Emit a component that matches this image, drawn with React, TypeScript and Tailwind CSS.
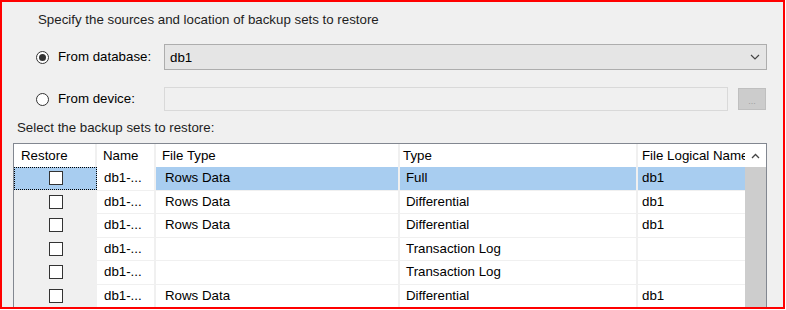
import React from 'react';

type Row = {
  fileType: string;
  type: string;
  logical: string;
};

const rows: Row[] = [
  { fileType: 'Rows Data', type: 'Full', logical: 'db1' },
  { fileType: 'Rows Data', type: 'Differential', logical: 'db1' },
  { fileType: 'Rows Data', type: 'Differential', logical: 'db1' },
  { fileType: '', type: 'Transaction Log', logical: '' },
  { fileType: '', type: 'Transaction Log', logical: '' },
  { fileType: 'Rows Data', type: 'Differential', logical: 'db1' },
];

const font = { fontFamily: '"Liberation Sans", Arial, sans-serif' };

function Radio({ checked }: { checked?: boolean }) {
  return (
    <span className="flex h-[13px] w-[13px] shrink-0 items-center justify-center rounded-full border border-[#333] bg-white">
      {checked && <span className="h-[7px] w-[7px] rounded-full bg-[#333]" />}
    </span>
  );
}

function Checkbox() {
  return <span className="block h-[14px] w-[14px] border border-[#333] bg-white" />;
}

export default function App() {
  return (
    <div className="h-[310px] w-[786px] bg-white text-[13.3px] text-black" style={font}>
      <div className="flex h-[309px] w-[785px] flex-col overflow-hidden border-2 border-[#ff0000] bg-[#f0f0f0]">
        {/* title */}
        <div className="mt-[10px] h-4 shrink-0 pl-[36px] leading-4 text-[#1e1e1e]">
          Specify the sources and location of backup sets to restore
        </div>

        {/* from database */}
        <div className="mt-[16px] flex h-[26px] shrink-0 items-center pl-[34px] pr-[16px]">
          <div className="flex w-[128px] items-center gap-[9px]">
            <Radio checked />
            <span>From database:</span>
          </div>
          <div className="flex h-full flex-1 items-center justify-between border border-[#adadad] bg-[#e5e5e5] pl-[5px] pr-[6px]">
            <span className="pt-[2px]">db1</span>
            <svg width="10" height="6" viewBox="0 0 10 6" fill="none">
              <path d="M1 1l4 4 4-4" stroke="#444" strokeWidth="1.2" />
            </svg>
          </div>
        </div>

        {/* from device */}
        <div className="mt-[17px] flex h-[24px] shrink-0 items-center pl-[34px] pr-[17px]">
          <div className="flex w-[128px] items-center gap-[9px]">
            <Radio />
            <span>From device:</span>
          </div>
          <div className="h-full flex-1 border border-[#d9d9d9] bg-[#f0f0f0]" />
          <div className="ml-[10px] flex h-[22px] w-[28px] items-end justify-center border border-[#bfbfbf] bg-[#cccccc] pb-[3px] text-[9px] leading-none text-[#a0a0a0]">
            ...
          </div>
        </div>

        {/* list */}
        <div className="mt-[9px] h-4 shrink-0 pl-[15px] leading-4 text-[#1e1e1e]">
          Select the backup sets to restore:
        </div>

        <div className="ml-[11px] mt-[7px] h-[200px] w-[754px] shrink-0 border border-[#828790] bg-white">
          {/* header */}
          <div className="flex h-[23px] items-center">
            <div className="flex h-full w-[83px] items-center border-r-2 border-[#f0f0f0] pl-[7px]">Restore</div>
            <div className="flex h-full w-[59px] items-center border-r-2 border-[#f0f0f0] pl-[6px]">Name</div>
            <div className="flex h-full w-[244px] items-center border-r-2 border-[#f0f0f0] pl-[6px]">File Type</div>
            <div className="flex h-full w-[238px] items-center border-r-2 border-[#f0f0f0] pl-[3px]">Type</div>
            <div className="flex h-full w-[107px] items-center overflow-hidden whitespace-nowrap pl-[4px]">
              File Logical Name
            </div>
            <div className="flex h-full w-[21px] items-center justify-center">
              <svg width="9" height="6" viewBox="0 0 9 6" fill="none">
                <path d="M1 5l3.5-3.5L8 5" stroke="#444" strokeWidth="1.3" />
              </svg>
            </div>
          </div>

          <div className="flex">
            <div className="w-[731px]">
              {rows.map((r, i) => {
                const sel = i === 0;
                return (
                  <div key={i} className="flex h-[23.5px] border-b border-[#f0f0f0]">
                    <div
                      className={`flex w-[83px] items-center justify-center ${
                        sel ? 'border border-dotted border-black bg-[#a8cdf0]' : 'bg-[#f0f0f0]'
                      }`}
                    >
                      <Checkbox />
                    </div>
                    <div className="flex w-[59px] items-center border-r-2 border-[#f0f0f0] bg-white pl-[7px]">
                      db1-...
                    </div>
                    <div
                      className={`flex w-[244px] items-center border-r-2 border-[#f0f0f0] pl-[9px] ${
                        sel ? 'bg-[#a8cdf0]' : ''
                      }`}
                    >
                      {r.fileType}
                    </div>
                    <div
                      className={`flex w-[238px] items-center border-r-2 border-[#f0f0f0] pl-[6px] ${
                        sel ? 'bg-[#a8cdf0]' : ''
                      }`}
                    >
                      {r.type}
                    </div>
                    <div className={`flex w-[107px] items-center pl-[4px] ${sel ? 'bg-[#a8cdf0]' : ''}`}>
                      {r.logical}
                    </div>
                  </div>
                );
              })}
            </div>
            <div className="h-[160px] w-[21px] bg-[#cdcdcd]" />
          </div>
        </div>
      </div>
    </div>
  );
}
